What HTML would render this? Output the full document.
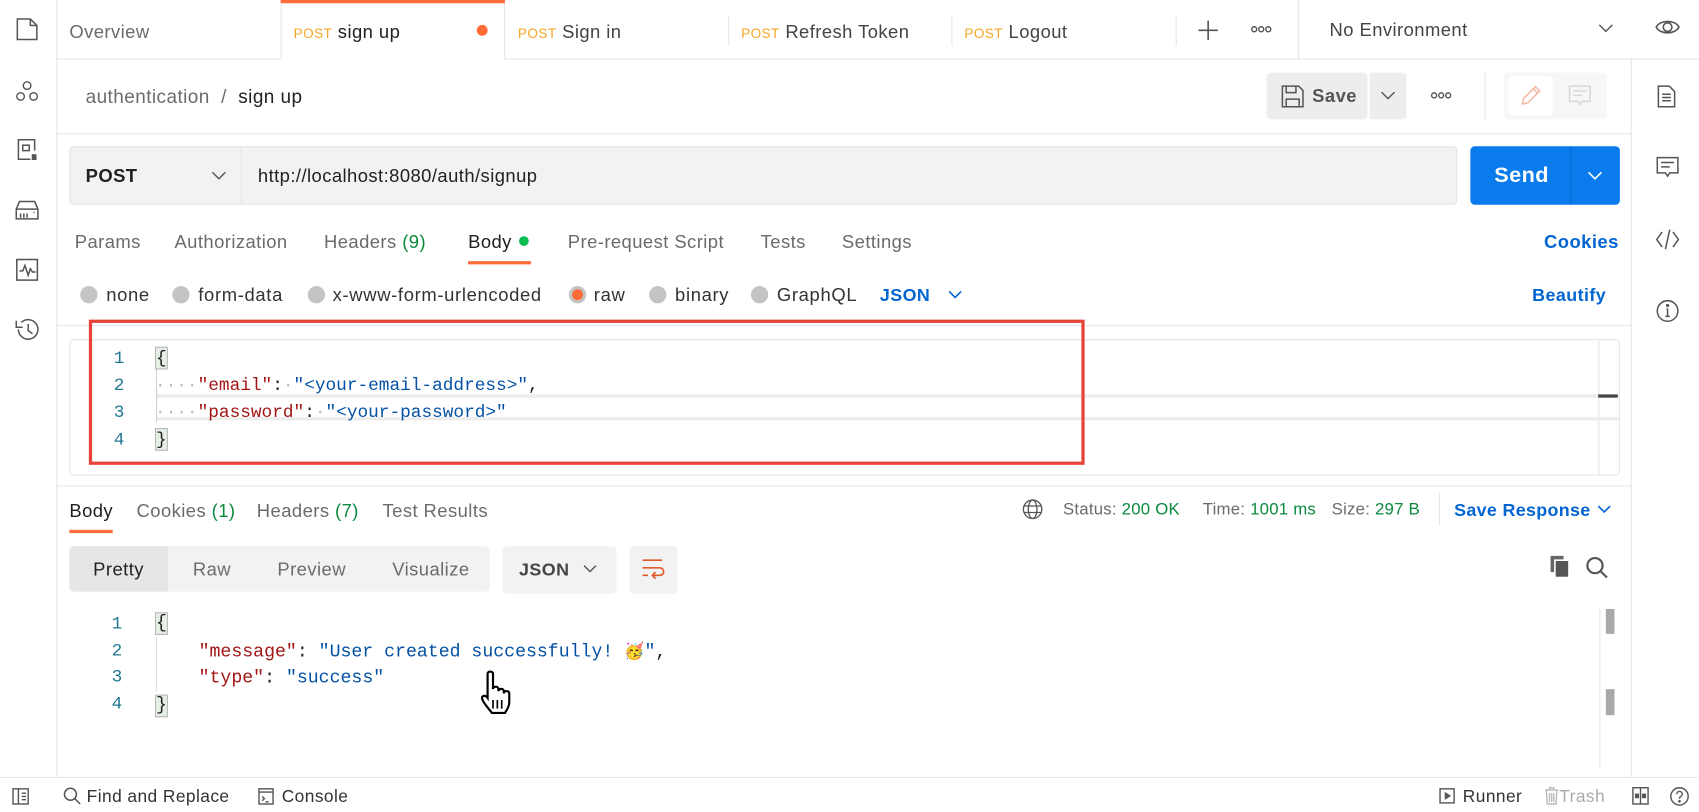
<!DOCTYPE html>
<html><head><meta charset="utf-8">
<style>
*{box-sizing:border-box;margin:0;padding:0}
html,body{width:1699px;height:811px;overflow:hidden;background:#fff}
#s{position:absolute;left:0;top:0;width:1568px;height:749px;transform:scale(1.08355);transform-origin:0 0;font-family:"Liberation Sans",sans-serif;font-size:16px;letter-spacing:.4px;color:#212121;background:#fff}
.a{position:absolute;white-space:nowrap;margin-top:2px}
.g{color:#6b6b6b}
.m{font-family:"Liberation Mono",monospace;font-size:16.4px;letter-spacing:0}
.hl{position:absolute;background:#e6e6e6}
.vl{position:absolute;background:#e6e6e6}
.post{color:#f5a623;font-size:12.5px}
.blue{color:#0265d2}
.grn{color:#0b8a3e}
.rad{position:absolute;width:16px;height:16px;border-radius:50%;background:#c4c4c4}
.ln{color:#237893}
.k{color:#a31515}
.v{color:#0451a5}
.br{background:#e6efe6;border:1px solid #b9b9b9}
.t{font-size:17px}
.r{font-size:17px;letter-spacing:.6px;color:#333}
svg{position:absolute}
</style></head><body><div id="s">
<div class="vl" style="left:52px;top:0;width:1px;height:717px"></div>
<svg style="left:14px;top:16px" width="22" height="22" viewBox="0 0 22 22" fill="none" stroke="#555" stroke-width="1.4"><path d="M2 1.5h12l6 6v13H2z M14 1.5v6h6"/></svg>
<svg style="left:14px;top:73px" width="22" height="24" viewBox="0 0 22 24" fill="none" stroke="#555" stroke-width="1.3"><circle cx="11" cy="6" r="3.5"/><circle cx="5" cy="16" r="3.5"/><circle cx="17" cy="16" r="3.5"/></svg>
<svg style="left:14px;top:127px" width="22" height="22" viewBox="0 0 22 22" fill="none" stroke="#555" stroke-width="1.4"><path d="M18 12V2H3v18h11"/><rect x="7" y="7" width="6" height="5"/><rect x="16" y="16" width="3" height="4" fill="#555"/></svg>
<svg style="left:13px;top:184px" width="24" height="20" viewBox="0 0 24 20" fill="none" stroke="#555" stroke-width="1.4"><path d="M2 9l3-7h14l3 7v9H2z M2 9h20 M6 13v4 M9 13v4 M12 13v4 M18 12h1"/></svg>
<svg style="left:14px;top:238px" width="22" height="22" viewBox="0 0 22 22" fill="none" stroke="#555" stroke-width="1.4"><rect x="1.5" y="1.5" width="19" height="19"/><path d="M4 12h3l2-5 3 9 2-6 2 3h3"/></svg>
<svg style="left:12px;top:292px" width="26" height="24" viewBox="0 0 26 24" fill="none" stroke="#555" stroke-width="1.4"><path d="M5 12a9 9 0 1 0 2.7-6.4 M3 4v6h6 M14 7v6l4 3"/></svg>
<div class="hl" style="left:52px;top:54px;width:1516px;height:1px"></div>
<div class="a g t" style="left:64px;top:18px">Overview</div>
<div style="position:absolute;left:259px;top:0;width:207px;height:55px;background:#fff;border-left:1px solid #e6e6e6;border-right:1px solid #e6e6e6"></div>
<div style="position:absolute;left:259px;top:0;width:207px;height:3px;background:#ff6c37"></div>
<div class="a t" style="left:271px;top:18px"><span class="post">POST</span> sign up</div>
<div style="position:absolute;left:440px;top:23px;width:10px;height:10px;border-radius:50%;background:#ff6c37"></div>
<div class="a t" style="left:478px;top:18px;color:#444"><span class="post">POST</span> Sign in</div>
<div class="vl" style="left:672px;top:14px;width:1px;height:28px"></div>
<div class="a t" style="left:684px;top:18px;color:#444"><span class="post">POST</span> Refresh Token</div>
<div class="vl" style="left:878px;top:14px;width:1px;height:28px"></div>
<div class="a t" style="left:890px;top:18px;color:#444"><span class="post">POST</span> Logout</div>
<div class="vl" style="left:1085px;top:14px;width:1px;height:28px"></div>
<svg style="left:1105px;top:18px" width="20" height="20" viewBox="0 0 20 20" stroke="#555" stroke-width="1.5"><path d="M10 1v18M1 10h18"/></svg>
<svg style="left:1154px;top:23px" width="20" height="8" viewBox="0 0 20 8" fill="none" stroke="#555" stroke-width="1.3"><circle cx="3.5" cy="4" r="2.3"/><circle cx="10" cy="4" r="2.3"/><circle cx="16.5" cy="4" r="2.3"/></svg>
<div class="vl" style="left:1198px;top:0;width:1px;height:55px"></div>
<div class="a t" style="left:1227px;top:16px;color:#444">No Environment</div>
<svg style="left:1475px;top:22px" width="14" height="9" viewBox="0 0 14 9" fill="none" stroke="#555" stroke-width="1.3"><path d="M1 1l6 6 6-6"/></svg>
<svg style="left:1527px;top:15px" width="24" height="20" viewBox="0 0 24 20" fill="none" stroke="#555" stroke-width="1.5"><path d="M1.5 10C5 3 19 3 22.5 10 19 17 5 17 1.5 10z"/><circle cx="12" cy="10" r="4"/></svg>
<div class="vl" style="left:1505px;top:55px;width:1px;height:662px"></div>
<svg style="left:1529px;top:78px" width="18" height="22" viewBox="0 0 18 22" fill="none" stroke="#555" stroke-width="1.4"><path d="M1.5 1.5h10l5 5v14h-15z M5 9h8M5 12h8M5 15h8"/></svg>
<svg style="left:1528px;top:144px" width="22" height="22" viewBox="0 0 22 22" fill="none" stroke="#555" stroke-width="1.4"><path d="M1.5 1.5h19v14H13l-2 3-2-3H1.5z M5 6h12M5 10h8"/></svg>
<svg style="left:1527px;top:210px" width="24" height="22" viewBox="0 0 24 22" fill="none" stroke="#555" stroke-width="1.4"><path d="M7 4L2 11l5 7 M17 4l5 7-5 7 M14 2l-4 18"/></svg>
<svg style="left:1528px;top:276px" width="22" height="22" viewBox="0 0 22 22" fill="none" stroke="#555" stroke-width="1.4"><circle cx="11" cy="11" r="9.5"/><path d="M11 9v7M9 16h4M10 9h1"/><circle cx="11" cy="6" r=".8" fill="#555"/></svg>
<div class="a" style="left:79px;top:77px;font-size:17.5px;color:#6b6b6b">authentication &nbsp;/ &nbsp;<span style="color:#212121">sign up</span></div>
<div style="position:absolute;left:1169px;top:67px;width:93px;height:43px;background:#ededed;border-radius:4px"></div>
<svg style="left:1182px;top:78px" width="22" height="22" viewBox="0 0 22 22" fill="none" stroke="#555" stroke-width="1.4"><path d="M1.5 1.5h15l4 4v15h-19z M5 1.5v6h9v-6 M5 20.5v-7h12v7"/></svg>
<div class="a" style="left:1211px;top:77px;font-size:17px;font-weight:bold;color:#555">Save</div>
<div style="position:absolute;left:1264px;top:67px;width:34px;height:43px;background:#ededed;border-radius:0 4px 4px 0"></div>
<svg style="left:1274px;top:84px" width="14" height="9" viewBox="0 0 14 9" fill="none" stroke="#555" stroke-width="1.3"><path d="M1 1l6 6 6-6"/></svg>
<svg style="left:1320px;top:84px" width="20" height="8" viewBox="0 0 20 8" fill="none" stroke="#555" stroke-width="1.3"><circle cx="3.5" cy="4" r="2.3"/><circle cx="10" cy="4" r="2.3"/><circle cx="16.5" cy="4" r="2.3"/></svg>
<div class="vl" style="left:1370px;top:67px;width:1px;height:43px"></div>
<div style="position:absolute;left:1388px;top:67px;width:95px;height:43px;background:#f7f7f7;border-radius:4px"></div>
<div style="position:absolute;left:1392px;top:70px;width:41px;height:37px;background:#fff;border-radius:4px"></div>
<svg style="left:1402px;top:77px" width="22" height="22" viewBox="0 0 22 22" fill="none" stroke="#f5b9a3" stroke-width="1.4"><path d="M3 19l1-5L15 3l4 4L8 18z M13 5l4 4"/></svg>
<svg style="left:1447px;top:78px" width="22" height="22" viewBox="0 0 22 22" fill="none" stroke="#d8d8d8" stroke-width="1.4"><path d="M1.5 1.5h19v14H13l-2 3-2-3H1.5z M5 6h12M5 10h8"/></svg>
<div class="hl" style="left:52px;top:123px;width:1453px;height:1px"></div>
<div style="position:absolute;left:64px;top:135px;width:1281px;height:54px;background:#f2f2f2;border:1px solid #e3e3e3;border-radius:4px"></div>
<div class="vl" style="left:222px;top:136px;width:1px;height:52px"></div>
<div class="a" style="left:79px;top:151px;font-weight:bold;font-size:17px">POST</div>
<svg style="left:195px;top:158px" width="14" height="9" viewBox="0 0 14 9" fill="none" stroke="#555" stroke-width="1.3"><path d="M1 1l6 6 6-6"/></svg>
<div class="a" style="left:238px;top:151px;font-size:17px">http://localhost:8080/auth/signup</div>
<div style="position:absolute;left:1357px;top:135px;width:138px;height:54px;background:#097bed;border-radius:4px"></div>
<div style="position:absolute;left:1449px;top:135px;width:1px;height:54px;background:#0a6fd3"></div>
<div class="a" style="left:1379px;top:149px;font-weight:bold;font-size:20px;color:#fff">Send</div>
<svg style="left:1465px;top:158px" width="14" height="9" viewBox="0 0 14 9" fill="none" stroke="#fff" stroke-width="1.5"><path d="M1 1l6 6 6-6"/></svg>
<div class="a g t" style="left:69px;top:212px">Params</div>
<div class="a g t" style="left:161px;top:212px">Authorization</div>
<div class="a g t" style="left:299px;top:212px">Headers <span class="grn">(9)</span></div>
<div class="a t" style="left:432px;top:212px">Body</div>
<div style="position:absolute;left:479px;top:218px;width:9px;height:9px;border-radius:50%;background:#0cbb52"></div>
<div style="position:absolute;left:432px;top:241px;width:58px;height:3px;background:#ff6c37"></div>
<div class="a g t" style="left:524px;top:212px">Pre-request Script</div>
<div class="a g t" style="left:702px;top:212px">Tests</div>
<div class="a g t" style="left:777px;top:212px">Settings</div>
<div class="a blue t" style="left:1425px;top:212px;font-weight:bold">Cookies</div>
<div class="rad" style="left:74px;top:264px"></div><div class="a r" style="left:98px;top:261px">none</div>
<div class="rad" style="left:159px;top:264px"></div><div class="a r" style="left:183px;top:261px">form-data</div>
<div class="rad" style="left:284px;top:264px"></div><div class="a r" style="left:307px;top:261px">x-www-form-urlencoded</div>
<div class="rad" style="left:525px;top:264px;background:#ff6c37;border:3px solid #c4c4c4"></div><div class="a r" style="left:548px;top:261px">raw</div>
<div class="rad" style="left:599px;top:264px"></div><div class="a r" style="left:623px;top:261px">binary</div>
<div class="rad" style="left:693px;top:264px"></div><div class="a r" style="left:717px;top:261px">GraphQL</div>
<div class="a blue" style="left:812px;top:262px;font-weight:bold;font-size:16.5px">JSON</div>
<svg style="left:875px;top:268px" width="13" height="8" viewBox="0 0 13 8" fill="none" stroke="#0265d2" stroke-width="1.5"><path d="M1 1l5.5 5.5L12 1"/></svg>
<div class="a blue" style="left:1414px;top:262px;font-weight:bold;font-size:16.5px">Beautify</div>
<div class="hl" style="left:52px;top:300px;width:1453px;height:1px"></div>
<div style="position:absolute;left:64px;top:313px;width:1431px;height:126px;border:1px solid #e6e6e6;border-radius:4px"></div>
<div class="vl" style="left:1475px;top:314px;width:1px;height:124px"></div>
<div style="position:absolute;left:144px;top:364px;width:1350px;height:24px;border-top:3px solid #ececec;border-bottom:3px solid #ececec"></div>
<div style="position:absolute;left:1475px;top:364px;width:18px;height:3px;background:#444"></div>
<div class="vl" style="left:144px;top:340px;width:1px;height:50px;background:#d0d0d0"></div>
<div class="a m ln" style="left:105px;top:316px;line-height:25px">1<br>2<br>3<br>4</div>
<div class="a m" style="left:143px;top:316px;line-height:25px"><span class="br">{</span><br><span style="color:#bbb">····</span><span class="k">"email"</span>:<span style="color:#bbb">·</span><span class="v">"&lt;your-email-address&gt;"</span>,<br><span style="color:#bbb">····</span><span class="k">"password"</span>:<span style="color:#bbb">·</span><span class="v">"&lt;your-password&gt;"</span><br><span class="br">}</span></div>
<div style="position:absolute;left:82px;top:295px;width:919px;height:134px;border:3px solid #e8433a"></div>
<div class="hl" style="left:52px;top:448px;width:1453px;height:1px"></div>
<div class="a t" style="left:64px;top:460px">Body</div>
<div style="position:absolute;left:64px;top:489px;width:40px;height:3px;background:#ff6c37"></div>
<div class="a g t" style="left:126px;top:460px">Cookies <span class="grn">(1)</span></div>
<div class="a g t" style="left:237px;top:460px">Headers <span class="grn">(7)</span></div>
<div class="a g t" style="left:353px;top:460px">Test Results</div>
<svg style="left:943px;top:460px" width="20" height="20" viewBox="0 0 20 20" fill="none" stroke="#555" stroke-width="1.2"><circle cx="10" cy="10" r="8.5"/><ellipse cx="10" cy="10" rx="4" ry="8.5"/><path d="M2 7h16M2 13h16"/></svg>
<div class="a g" style="left:981px;top:460px;font-size:15.5px;letter-spacing:.2px">Status: <span class="grn">200 OK</span></div>
<div class="a g" style="left:1110px;top:460px;font-size:15.5px;letter-spacing:.2px">Time: <span class="grn">1001 ms</span></div>
<div class="a g" style="left:1229px;top:460px;font-size:15.5px;letter-spacing:.2px">Size: <span class="grn">297 B</span></div>
<div class="vl" style="left:1328px;top:455px;width:1px;height:30px"></div>
<div class="a blue" style="left:1342px;top:460px;font-size:16.5px;font-weight:bold;letter-spacing:.3px">Save Response</div>
<svg style="left:1474px;top:466px" width="13" height="8" viewBox="0 0 13 8" fill="none" stroke="#0265d2" stroke-width="1.5"><path d="M1 1l5.5 5.5L12 1"/></svg>
<div style="position:absolute;left:64px;top:504px;width:388px;height:42px;background:#f2f2f2;border-radius:4px"></div>
<div style="position:absolute;left:64px;top:504px;width:91px;height:42px;background:#e6e6e6;border-radius:4px 0 0 4px"></div>
<div class="a t" style="left:86px;top:514px">Pretty</div>
<div class="a g t" style="left:178px;top:514px">Raw</div>
<div class="a g t" style="left:256px;top:514px">Preview</div>
<div class="a g t" style="left:362px;top:514px">Visualize</div>
<div style="position:absolute;left:464px;top:504px;width:105px;height:44px;background:#f2f2f2;border-radius:4px"></div>
<div class="a" style="left:479px;top:515px;font-weight:bold;color:#444;font-size:16.5px">JSON</div>
<svg style="left:538px;top:521px" width="13" height="8" viewBox="0 0 13 8" fill="none" stroke="#555" stroke-width="1.3"><path d="M1 1l5.5 5.5L12 1"/></svg>
<div style="position:absolute;left:581px;top:504px;width:44px;height:44px;background:#f2f2f2;border-radius:4px"></div>
<svg style="left:592px;top:515px" width="22" height="22" viewBox="0 0 22 22" fill="none" stroke="#e05a2b" stroke-width="1.5"><path d="M1 2h18 M1 9h16a3 3 0 0 1 0 7h-6 M13 13l-3 3 3 3 M1 16h5"/></svg>
<svg style="left:1430px;top:512px" width="20" height="22" viewBox="0 0 20 22"><rect x="1" y="1" width="12" height="15" fill="#666"/><rect x="5" y="5" width="13" height="16" fill="#555" stroke="#fff" stroke-width="1.5"/></svg>
<svg style="left:1463px;top:513px" width="22" height="22" viewBox="0 0 22 22" fill="none" stroke="#555" stroke-width="2"><circle cx="9" cy="9" r="7"/><path d="M14 14l6 6"/></svg>
<div class="a m ln" style="left:103px;top:562px;line-height:24.5px">1<br>2<br>3<br>4</div>
<div class="vl" style="left:144px;top:588px;width:1px;height:50px;background:#e0e0e0"></div>
<div class="a m" style="left:143px;top:562px;line-height:24.5px;font-size:16.8px"><span class="br">{</span><br>&nbsp;&nbsp;&nbsp;&nbsp;<span class="k">"message"</span>: <span class="v">"User created successfully! <span style="font-family:'Noto Color Emoji',sans-serif;font-size:15px">🥳</span>"</span>,<br>&nbsp;&nbsp;&nbsp;&nbsp;<span class="k">"type"</span>: <span class="v">"success"</span><br><span class="br">}</span></div>
<div class="vl" style="left:1476px;top:562px;width:1px;height:148px"></div>
<div style="position:absolute;left:1482px;top:562px;width:8px;height:23px;background:#a8a8a8"></div>
<div style="position:absolute;left:1482px;top:636px;width:8px;height:24px;background:#a8a8a8"></div>
<svg style="left:440px;top:618px" width="44" height="44" viewBox="0 0 44 44" fill="#fff" stroke="#000" stroke-width="2"><path d="M10 4c0-3 5-3 5 0v14c0-3 5-3 5 0v2c0-3 5-3 5 0v2c0-3 5-3 5 0v8c0 5-3 8-4 10H14c-2-3-8-9-9-13-1-3 3-4 5-1V4z"/><path d="M15 28v8M19 28v8M23 28v8" stroke-width="1.5"/></svg>
<div class="hl" style="left:0;top:717px;width:1568px;height:1px"></div>
<svg style="left:11px;top:727px" width="16" height="16" viewBox="0 0 16 16" fill="none" stroke="#555" stroke-width="1.3"><rect x="1" y="1" width="14" height="14"/><path d="M6 1v14M9 5h4M9 8h4M9 11h4"/></svg>
<svg style="left:58px;top:726px" width="17" height="17" viewBox="0 0 17 17" fill="none" stroke="#555" stroke-width="1.4"><circle cx="7" cy="7" r="5.5"/><path d="M11 11l5 5"/></svg>
<div class="a" style="left:80px;top:725px;color:#333">Find and Replace</div>
<svg style="left:238px;top:727px" width="15" height="16" viewBox="0 0 15 16" fill="none" stroke="#555" stroke-width="1.3"><rect x="1" y="1" width="13" height="14"/><path d="M1 4h13M4 8l2 2-2 2M7 13h3"/></svg>
<div class="a" style="left:260px;top:725px;color:#333">Console</div>
<svg style="left:1328px;top:727px" width="15" height="15" viewBox="0 0 15 15" fill="none" stroke="#555" stroke-width="1.3"><rect x="1" y="1" width="13" height="13"/><path d="M6 5l4 2.5L6 10z" fill="#555"/></svg>
<div class="a" style="left:1350px;top:725px;color:#333">Runner</div>
<svg style="left:1425px;top:726px" width="14" height="17" viewBox="0 0 14 17" fill="none" stroke="#bbb" stroke-width="1.3"><path d="M1 3h12M5 3V1h4v2M2 3l1 13h8l1-13M5 6v8M7 6v8M9 6v8"/></svg>
<div class="a" style="left:1439px;top:725px;color:#aaa">Trash</div>
<svg style="left:1506px;top:726px" width="16" height="17" viewBox="0 0 16 17" fill="none" stroke="#555" stroke-width="1.3"><rect x="1" y="1" width="14" height="15"/><path d="M8 1v15"/><rect x="3.5" y="7" width="2.5" height="3" fill="#555"/><rect x="10" y="7" width="2.5" height="3" fill="#555"/></svg>
<svg style="left:1541px;top:726px" width="18" height="18" viewBox="0 0 18 18" fill="none" stroke="#555" stroke-width="1.3"><circle cx="9" cy="9" r="8"/><path d="M6.5 7a2.5 2.5 0 1 1 3.5 2.2c-.7.4-1 .8-1 1.8"/><circle cx="9" cy="13.5" r=".6" fill="#555"/></svg>
</div></body></html>
